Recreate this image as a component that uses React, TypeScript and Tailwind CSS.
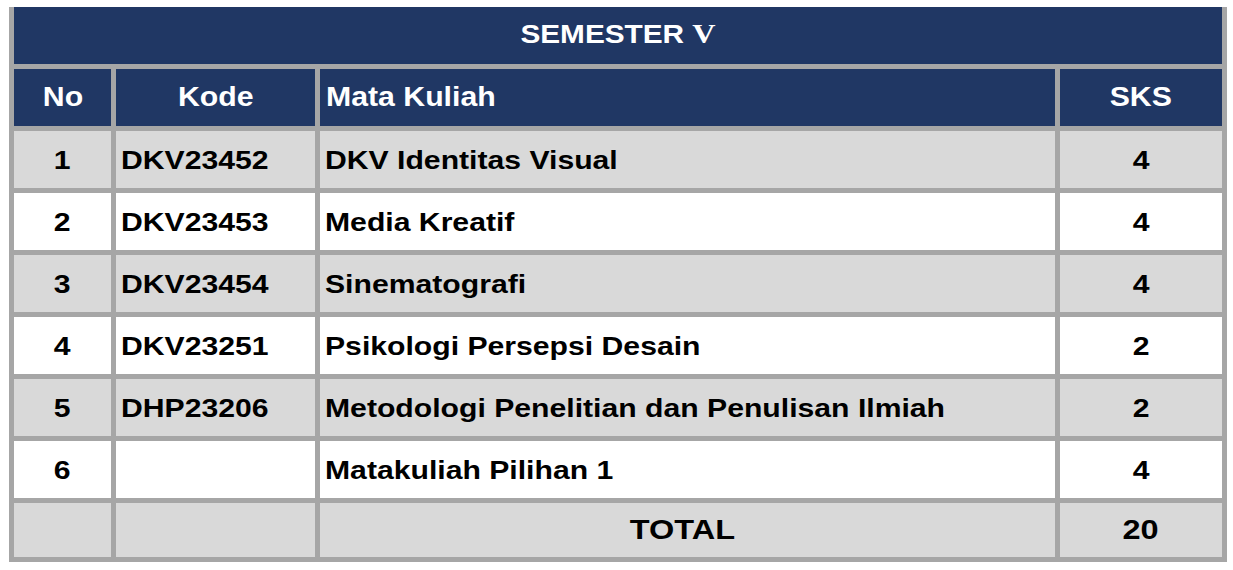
const rows = [
  { no: "1", kode: "DKV23452", mk: "DKV Identitas Visual", sks: "4" },
  { no: "2", kode: "DKV23453", mk: "Media Kreatif", sks: "4" },
  { no: "3", kode: "DKV23454", mk: "Sinematografi", sks: "4" },
  { no: "4", kode: "DKV23251", mk: "Psikologi Persepsi Desain", sks: "2" },
  { no: "5", kode: "DHP23206", mk: "Metodologi Penelitian dan Penulisan Ilmiah", sks: "2" },
  { no: "6", kode: "", mk: "Matakuliah Pilihan 1", sks: "4" },
];

const Txt = ({ children, left }: { children: React.ReactNode; left?: boolean }) => (
  <span
    className={`inline-block text-[26px] font-bold scale-x-[1.16] ${left ? "origin-left" : "origin-center"}`}
  >
    {children}
  </span>
);

const Head = ({ children, left }: { children: React.ReactNode; left?: boolean }) => (
  <span
    className={`inline-block text-[27px] font-bold scale-x-[1.12] ${left ? "origin-left" : "origin-center"}`}
  >
    {children}
  </span>
);

export default function App() {
  return (
    <div className="bg-white w-[1233px] h-[570px] pt-[7px] pl-[9px] font-['Liberation_Sans',Arial,sans-serif] text-black leading-none">
      <div className="w-[1218px] bg-[#a6a6a6] px-[5px] pb-[5px] grid grid-cols-[97px_199px_735px_162px] grid-rows-[repeat(8,57px)_54px] gap-[5px]">
        {/* Title */}
        <div className="col-span-4 bg-[#203764] text-white flex items-center justify-center pb-[2px]">
          <span className="inline-block text-[25px] font-bold scale-x-[1.19] origin-center">
            SEMESTER{" "}
            <span className="font-['Liberation_Serif','DejaVu_Serif',serif] text-[27px]">V</span>
          </span>
        </div>

        {/* Header */}
        <div className="bg-[#203764] text-white flex items-center justify-center">
          <Head>No</Head>
        </div>
        <div className="bg-[#203764] text-white flex items-center justify-center">
          <Head>Kode</Head>
        </div>
        <div className="bg-[#203764] text-white flex items-center pl-[6px]">
          <Head left>Mata Kuliah</Head>
        </div>
        <div className="bg-[#203764] text-white flex items-center justify-center">
          <Head>SKS</Head>
        </div>

        {rows.map((r, i) => {
          const bg = i % 2 === 0 ? "bg-[#d9d9d9]" : "bg-white";
          return (
            <div key={r.no} className="contents">
              <div className={`${bg} flex items-center justify-center`}>
                <Txt>{r.no}</Txt>
              </div>
              <div className={`${bg} flex items-center pl-[5px]`}>
                <Txt left>{r.kode}</Txt>
              </div>
              <div className={`${bg} flex items-center pl-[5px]`}>
                <Txt left>{r.mk}</Txt>
              </div>
              <div className={`${bg} flex items-center justify-center`}>
                <Txt>{r.sks}</Txt>
              </div>
            </div>
          );
        })}

        {/* Total */}
        <div className="bg-[#d9d9d9]" />
        <div className="bg-[#d9d9d9]" />
        <div className="bg-[#d9d9d9] flex items-center justify-center pr-[10px]">
          <span className="inline-block text-[28px] font-bold scale-x-[1.16] origin-center">TOTAL</span>
        </div>
        <div className="bg-[#d9d9d9] flex items-center justify-center">
          <span className="inline-block text-[28px] font-bold scale-x-[1.16] origin-center">20</span>
        </div>
      </div>
    </div>
  );
}
